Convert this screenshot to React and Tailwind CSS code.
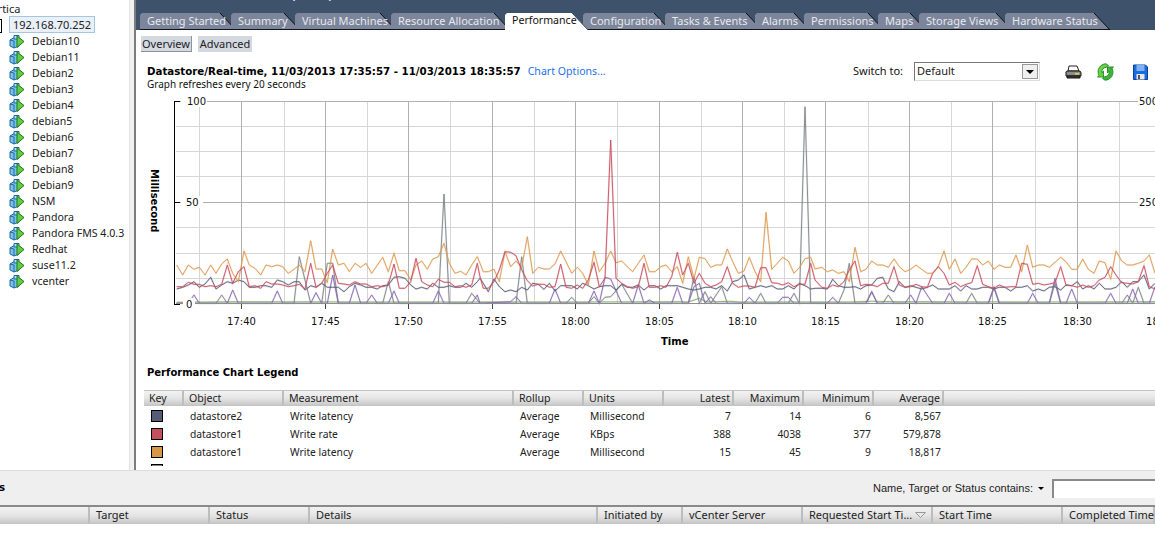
import React from "react";

const F = "font-['DejaVu_Sans',sans-serif]";
const UI = "font-['Noto_Sans',sans-serif]";

const hosts = ["Debian10","Debian11","Debian2","Debian3","Debian4","debian5","Debian6","Debian7","Debian8","Debian9","NSM","Pandora","Pandora FMS 4.0.3","Redhat","suse11.2","vcenter"];

const tabs = [
  ["Getting Started", 91, 96],
  ["Summary", 64, 69],
  ["Virtual Machines", 96, 101],
  ["Resource Allocation", 114, 119],
  ["Performance", 78, 83, true],
  ["Configuration", 82, 87],
  ["Tasks & Events", 90, 97],
  ["Alarms", 49, 55],
  ["Permissions", 74, 80],
  ["Maps", 41, 48],
  ["Storage Views", 86, 93],
  ["Hardware Status", 100, 105],
];

function conv(pts, ox) { return pts.map(([x, y]) => [ox + x / 3, 90 + y / 3]); }
function ln(a, b, c) { return [...conv(a, 140), ...conv(b, 480), ...conv(c, 815)].map(([x, y]) => x.toFixed(1) + "," + y.toFixed(1)).join(" "); }

const orange = ln(
  [[110,525],[128,555],[145,525],[162,538],[178,532],[195,555],[212,525],[228,550],[245,522],[262,507],[278,550],[295,575],[312,483],[328,525],[345,535],[362,555],[378,525],[395,530],[412,525],[428,530],[445,550],[462,538],[478,525],[495,545],[512,452],[528,537],[545,537],[562,578],[578,477],[595,525],[612,520],[628,545],[645,520],[662,532],[678,520],[695,550],[728,502],[745,545],[762,490],[778,542],[795,542],[812,570],[828,525],[845,513],[862,538],[878,507],[895,500],[912,460],[928,520],[945,550],[962,544],[978,555],[995,525],[1012,500]],
  [[0,520],[10,545],[25,545],[42,538],[58,575],[75,485],[92,530],[108,513],[125,533],[142,440],[158,550],[175,532],[192,537],[208,537],[225,522],[242,483],[258,515],[275,550],[292,532],[308,550],[325,585],[342,483],[358,545],[375,520],[392,483],[408,518],[425,513],[442,530],[458,545],[475,520],[492,495],[508,545],[525,545],[542,530],[558,525],[575,545],[592,530],[608,580],[625,500],[642,565],[658,502],[675,506],[692,532],[708,525],[725,525],[742,477],[758,515],[775,550],[792,543],[808,502],[825,545],[842,575],[858,367],[875,538],[892,520],[908,502],[925,513],[942,550],[958,533],[975,506],[992,502]],
  [[0,537],[20,532],[37,545],[53,540],[70,550],[87,545],[103,575],[120,472],[137,545],[153,538],[170,513],[187,525],[203,525],[220,532],[237,507],[253,530],[270,545],[287,538],[303,525],[320,538],[337,550],[353,550],[370,530],[387,483],[403,538],[420,507],[437,550],[453,532],[470,507],[487,507],[503,525],[520,513],[537,538],[553,525],[570,532],[587,532],[603,495],[620,545],[637,465],[653,532],[670,525],[687,525],[703,532],[720,517],[737,502],[753,515],[770,538],[787,538],[803,507],[820,538],[837,550],[853,513],[870,518],[887,568],[903,483],[920,513],[937,525],[953,525],[970,520],[987,513],[1003,495],[1020,550]]
);
const red = ln(
  [[110,590],[128,590],[145,577],[162,583],[178,583],[195,590],[212,587],[228,590],[245,583],[262,525],[278,580],[295,545],[312,530],[328,590],[345,587],[362,595],[378,575],[395,582],[412,582],[428,585],[445,590],[462,587],[478,583],[495,597],[512,520],[528,592],[545,580],[562,550],[578,525],[595,580],[612,582],[628,585],[645,575],[662,582],[678,582],[695,590],[712,587],[728,590],[745,585],[762,522],[778,595],[795,595],[812,575],[828,505],[845,575],[862,585],[878,590],[895,568],[912,577],[928,577],[945,590],[962,587],[978,592],[995,585],[1012,520]],
  [[0,560],[10,595],[25,595],[42,575],[58,540],[75,485],[92,487],[108,497],[125,540],[142,572],[158,588],[175,583],[192,583],[208,592],[225,590],[242,522],[258,592],[275,595],[292,585],[308,595],[325,570],[342,517],[358,590],[375,565],[392,150],[408,565],[425,580],[442,590],[458,595],[475,590],[492,520],[508,592],[525,592],[542,587],[558,592],[575,560],[592,487],[608,555],[625,520],[642,580],[658,550],[675,580],[692,590],[708,585],[725,575],[742,530],[758,580],[775,592],[792,588],[808,588],[825,592],[842,533],[858,533],[875,578],[892,580],[908,585],[925,578],[942,590],[958,583],[975,583],[992,520]],
  [[0,570],[20,592],[37,595],[53,585],[70,590],[87,575],[103,540],[120,513],[137,587],[153,583],[170,585],[187,590],[203,580],[220,580],[237,530],[253,585],[270,592],[287,590],[303,583],[320,590],[337,592],[353,550],[370,530],[387,550],[403,585],[420,577],[437,590],[453,583],[470,578],[487,527],[503,583],[520,590],[537,595],[553,585],[570,592],[587,590],[603,590],[620,520],[637,523],[653,583],[670,580],[687,585],[703,582],[720,578],[737,530],[753,585],[770,587],[787,592],[803,585],[820,592],[837,587],[853,570],[870,562],[887,530],[903,555],[920,578],[937,580],[953,582],[970,575],[987,527],[1003,590],[1020,597]]
);
const slate = ln(
  [[110,597],[128,592],[145,585],[162,575],[178,592],[195,582],[212,562],[228,597],[245,585],[262,575],[278,580],[295,570],[312,575],[328,592],[345,592],[362,587],[378,587],[395,592],[412,570],[428,575],[445,585],[462,575],[478,575],[495,600],[512,587],[528,592],[545,580],[562,592],[578,592],[595,592],[612,605],[628,590],[645,580],[662,585],[678,592],[695,592],[712,597],[728,587],[745,585],[762,562],[778,560],[795,565],[812,585],[828,597],[845,592],[862,597],[878,580],[895,592],[912,592],[928,587],[945,592],[962,592],[978,580],[995,592],[1012,575]],
  [[0,565],[10,580],[25,605],[42,567],[58,590],[75,605],[92,600],[108,605],[125,592],[142,600],[158,580],[175,583],[192,598],[208,580],[225,603],[242,587],[258,587],[275,587],[292,597],[308,580],[325,587],[342,597],[358,590],[375,587],[392,587],[408,600],[425,583],[442,592],[458,592],[475,585],[492,600],[508,587],[525,587],[542,597],[558,587],[575,587],[592,587],[608,592],[625,597],[642,600],[658,597],[675,592],[692,592],[708,597],[725,587],[742,603],[758,575],[775,570],[792,555],[808,597],[825,592],[842,587],[858,592],[875,587],[892,597],[908,597],[925,587],[942,597],[958,580],[975,587],[992,597]],
  [[0,595],[20,595],[37,597],[53,568],[70,587],[87,592],[103,592],[120,590],[137,597],[153,587],[170,585],[187,565],[203,562],[220,597],[237,605],[253,575],[270,592],[287,587],[303,592],[320,597],[337,592],[353,585],[370,597],[387,597],[403,597],[420,587],[437,603],[453,587],[470,597],[487,597],[503,592],[520,592],[537,597],[553,592],[570,592],[587,603],[603,592],[620,592],[637,587],[653,603],[670,597],[687,603],[703,592],[720,590],[737,600],[753,585],[770,587],[787,575],[803,597],[820,587],[837,597],[853,580],[870,597],[887,597],[903,592],[920,575],[937,592],[953,575],[970,575],[987,555],[1003,597],[1020,580]]
);
const gray = ln(
  [[110,640],[228,640],[245,615],[262,640],[462,640],[478,500],[495,570],[512,640],[545,640],[562,520],[578,520],[595,640],[728,640],[745,575],[762,640],[895,640],[912,312],[928,640],[978,640],[995,610],[1012,630]],
  [[0,640],[108,640],[125,500],[142,640],[258,640],[275,622],[292,640],[325,640],[342,620],[358,640],[375,622],[392,620],[425,583],[458,640],[625,640],[642,560],[658,640],[675,605],[692,640],[725,590],[742,640],[825,640],[842,610],[858,640],[925,640],[942,610],[958,640],[975,50],[992,640]],
  [[70,640],[87,600],[103,520],[120,640],[153,640],[170,605],[187,640],[203,640],[220,615],[237,640],[453,640],[470,610],[487,640],[520,640],[537,595],[553,640],[703,640],[720,580],[737,640],[920,640],[937,615],[953,640],[970,592],[987,640],[1020,640]]
);
const purple = ln(
  [[110,640],[145,640],[162,615],[178,640],[262,640],[278,600],[295,640],[395,640],[412,603],[428,640],[512,640],[528,608],[545,640],[562,640],[578,555],[595,640],[628,640],[645,585],[662,640],[678,640],[695,615],[712,640],[745,640],[762,603],[778,640],[878,640],[895,603],[912,640],[995,640],[1012,615]],
  [[0,640],[92,635],[108,620],[125,640],[208,640],[225,597],[242,640],[325,640],[342,603],[358,640],[375,562],[392,567],[425,640],[458,640],[475,585],[492,640],[508,630],[525,640],[575,640],[592,592],[608,640],[625,640],[642,590],[658,580],[675,640],[692,620],[708,640],[792,640],[808,622],[825,640],[892,640],[908,622],[925,622],[942,640]],
  [[37,640],[53,622],[70,640],[153,640],[170,605],[187,640],[270,640],[287,615],[303,640],[320,590],[353,640],[387,640],[403,610],[420,640],[520,640],[537,590],[553,640],[637,640],[653,610],[670,640],[703,640],[720,565],[737,640],[753,640],[770,597],[787,640],[870,640],[887,610],[903,640],[937,640],[953,597],[970,640],[1003,640],[1020,590]]
);
const green = ln(
  [[110,637],[300,635],[700,636],[1020,636]],
  [[300,636],[600,635],[625,636],[658,625],[680,636],[750,634],[780,636],[1000,636]],
  [[100,636],[170,634],[250,635],[700,636],[1020,635]]
);

const majors = [241, 325, 408, 492, 575, 659, 742, 825, 909, 992, 1077];
const minors = [199, 284, 367, 450, 534, 617, 701, 784, 868, 951, 1035, 1119];
const hLines = [126, 151, 176, 227, 253, 278];
const xLabels = ["17:40","17:45","17:50","17:55","18:00","18:05","18:10","18:15","18:20","18:25","18:30","18:35"];

function Series({ points, color }) {
  return (
    <>
      <polyline points={points} fill="none" stroke={color} strokeWidth="2" strokeOpacity="0.18" />
      <polyline points={points} fill="none" stroke={color} strokeWidth="1" strokeOpacity="0.9" />
    </>
  );
}

function Chart() {
  const fam = { fontFamily: "'DejaVu Sans', sans-serif" };
  return (
    <svg width="1155" height="260" viewBox="0 90 1155 260" className="block shrink-0">
      {minors.map((x) => <line key={x} x1={x + 0.5} x2={x + 0.5} y1="101" y2="304" stroke="#d6d6d6" />)}
      {hLines.map((y) => <line key={y} x1="176" x2="1155" y1={y + 0.5} y2={y + 0.5} stroke="#d6d6d6" />)}
      {majors.map((x) => <line key={x} x1={x + 0.5} x2={x + 0.5} y1="101" y2="304" stroke="#b0b0b0" />)}
      {majors.map((x) => <line key={"t" + x} x1={x + 0.5} x2={x + 0.5} y1="304" y2="309" stroke="#444" />)}
      <line x1="176" x2="1138" y1="101.5" y2="101.5" stroke="#b0b0b0" />
      <line x1="176" x2="1138" y1="202.5" y2="202.5" stroke="#b0b0b0" />
      <Series points={green} color="#7fb069" />
      <Series points={gray} color="#7d8589" />
      <Series points={purple} color="#8a69b0" />
      <Series points={slate} color="#5c6078" />
      <Series points={orange} color="#dd9a50" />
      <Series points={red} color="#c9505f" />
      <line x1="176" x2="1155" y1="303.5" y2="303.5" stroke="#8f8a96" />
      <line x1="174.5" x2="174.5" y1="101" y2="305" stroke="#000" />
      <line x1="174" x2="180" y1="101.5" y2="101.5" stroke="#000" />
      <line x1="174" x2="180" y1="202.5" y2="202.5" stroke="#000" />
      <line x1="174" x2="180" y1="304.5" y2="304.5" stroke="#000" />
      <rect x="181" y="95" width="26" height="12" fill="#fff" />
      <rect x="181" y="196" width="22" height="12" fill="#fff" />
      <rect x="183" y="298" width="12" height="8" fill="#fff" />
      <g style={fam} fontSize="10" fill="#111">
        <text x="187" y="105">100</text>
        <text x="186" y="206">50</text>
        <text x="186" y="308">0</text>
        <text x="1139" y="105">500</text>
        <text x="1139" y="206">250</text>
        {xLabels.map((l, i) => <text key={l} x={(i < 11 ? majors[i] : 1160) + 0.5} y="325" textAnchor="middle">{l}</text>)}
      </g>
      <g style={fam} fontSize="10" fontWeight="700" fill="#000">
        <text x="661" y="345">Time</text>
        <text transform="translate(151 169) rotate(90)">Millisecond</text>
      </g>
    </svg>
  );
}

function HostIcon() {
  return (
    <svg width="16" height="15" viewBox="0 0 16 15" className="shrink-0">
      <path d="M1 6 L6 3 L10 5 V12 L5 14 L1 12 Z" fill="#7cc0e6" stroke="#1d6aa8" />
      <path d="M5 1.5 H10 V5 H5Z" fill="#b8e0f4" stroke="#1d6aa8" />
      <path d="M5 7 V14 M1 6 L5 7" stroke="#1d6aa8" fill="none" />
      <path d="M8 2 L15 7.5 L8 13.5 Z" fill="#62cc48" stroke="#1f7a18" strokeLinejoin="round" />
    </svg>
  );
}

function Tab({ label, slot, w, active }) {
  const pts = `0,17 0,2 2,0 ${w - 16},0 ${w},17`;
  return (
    <div className={`relative h-[17px] shrink-0 w-[var(--s)] ${active ? "z-10" : ""}`} style={{ "--s": slot + "px" }}>
      <svg width={w} height="17" className="absolute left-0 top-0 overflow-visible">
        <polygon points={pts} fill={active ? "#ffffff" : "#7c859a"} />
        {!active && <line x1="0" x2={w} y1="16.5" y2="16.5" stroke="#10151c" />}
        <line x1={w - 16} y1="0" x2={w} y2="17" stroke={active ? "#3e526c" : "#0c0f14"} />
      </svg>
      <span className={`absolute left-[7px] top-[-1px] whitespace-nowrap leading-[17px] ${UI} ${active ? "text-[#111] text-[10.6px]" : "text-[#e6e9ee] text-[11px]"}`}>{label}</span>
    </div>
  );
}

const legendCols = [
  ["Key", "w-[40px]", ""], ["Object", "w-[100px]", ""], ["Measurement", "w-[230px]", ""], ["Rollup", "w-[70px]", ""], ["Units", "w-[80px]", ""],
  ["Latest", "w-[70px]", "r"], ["Maximum", "w-[70px]", "r"], ["Minimum", "w-[70px]", "r"], ["Average", "w-[70px]", "r"],
];
const rows = [
  ["#565b77", "datastore2", "Write latency", "Average", "Millisecond", "7", "14", "6", "8,567"],
  ["#c4505e", "datastore1", "Write rate", "Average", "KBps", "388", "4038", "377", "579,878"],
  ["#d79748", "datastore1", "Write latency", "Average", "Millisecond", "15", "45", "9", "18,817"],
  ["#80868a", "datastore1", "Read latency", "Average", "Millisecond", "2", "54", "0", "3,214"],
];
const taskCols = [
  ["", "w-[90px]"], ["Target", "w-[120px]"], ["Status", "w-[100px]"], ["Details", "w-[288px]"], ["Initiated by", "w-[85px]"], ["vCenter Server", "w-[120px]"],
  ["Requested Start Ti...", "w-[130px]"], ["Start Time", "w-[130px]"], ["Completed Time", "w-[92px]"],
];
const grad = "bg-gradient-to-b from-[#f2f2f2] via-[#e6e6e6] to-[#c9c9c9]";

function Printer() {
  return (
    <svg width="17" height="15" viewBox="0 0 17 15">
      <path d="M4 1 H12 L14 6 H3Z" fill="#fff" stroke="#222" />
      <path d="M1 7 Q1 6 3 6 H14 Q16 6 16 8 V11 H1Z" fill="#8c8c8c" stroke="#111" />
      <path d="M2 11 H15 V13 H2Z" fill="#444" stroke="#111" />
      <rect x="10" y="8" width="4" height="1.5" fill="#e7d23a" />
    </svg>
  );
}
function Refresh() {
  return (
    <svg width="17" height="18" viewBox="0 0 17 18">
      <path d="M9 0.8 A8 8 0 0 0 2 12.6 L0.5 14 H6.5 V8 L4.8 9.7 A4.4 4.4 0 0 1 9 4.4 L11.5 2.6 Z" fill="#6ccf45" stroke="#1c8a22" strokeWidth="0.9" strokeLinejoin="round" />
      <path d="M8 17.2 A8 8 0 0 0 15 5.4 L16.5 4 H10.5 V10 L12.2 8.3 A4.4 4.4 0 0 1 8 13.6 L5.5 15.4 Z" fill="#3fb536" stroke="#1c8a22" strokeWidth="0.9" strokeLinejoin="round" />
    </svg>
  );
}
function Save() {
  return (
    <svg width="15" height="16" viewBox="0 0 15 16">
      <path d="M0.5 1 H12.5 L14.5 3 V15.5 H0.5Z" fill="#1a6be0" stroke="#0c3f9c" />
      <rect x="3.5" y="1" width="8" height="6" fill="#7fb2f2" />
      <rect x="3.5" y="10" width="8" height="5.5" fill="#e8e8e8" />
      <rect x="5" y="11" width="2" height="4" fill="#555" />
    </svg>
  );
}

export default function App() {
  return (
    <div className={`h-[538px] w-[1155px] overflow-hidden bg-white flex flex-col text-[#222] ${UI}`}>
      <div className="h-[470px] flex shrink-0 overflow-hidden">
        {/* Tree */}
        <div className="w-[130px] shrink-0 bg-white border-r border-[#e3e3e3] overflow-hidden text-[10.6px]">
          <div className="h-[16px] leading-[17px] ml-[-15px] whitespace-nowrap text-[11px]">Vertica</div>
          <div className="h-[17px] flex items-center">
            <div className="w-[2px] h-[14px] mt-[3px] border-y border-r border-black shrink-0" />
            <div className="ml-[7px] w-[86px] h-[17px] border border-[#a6c5e3] bg-[#e9f0f8] pl-[3px] leading-[15px] whitespace-nowrap text-[11px]">192.168.70.252</div>
          </div>
          <div>
            {hosts.map((h) => (
              <div key={h} className="h-[16px] flex items-center pl-[9px] gap-[7px] whitespace-nowrap">
                <HostIcon />
                <span className="leading-[16px]">{h}</span>
              </div>
            ))}
          </div>
        </div>
        {/* gutter */}
        <div className="w-[6px] shrink-0 bg-[#f1f1f1] border-r-[2px] border-[#7d7d7d]" />
        {/* Main */}
        <div className="flex-1 min-w-0 flex flex-col overflow-hidden">
          <div className="h-[30px] shrink-0 bg-[#3e526c] relative overflow-hidden">
            <div className={`h-[13px] pl-[7px] mt-[-11px] text-[10px] leading-[13px] font-bold text-white whitespace-nowrap ${F}`}>localhost.lan VMware ESXi, 4.1.0, 260247</div>
            <div className="flex pl-[4px] pt-[11px]">
              {tabs.map(([l, s, w, a]) => <Tab key={l} label={l} slot={s} w={w} active={a} />)}
            </div>
          </div>
          <div className="flex gap-[6px] pl-[5px] pt-[6px] h-[32px] shrink-0 text-[11px]">
            <div className="w-[51px] h-[16px] bg-[#d4d8e0] border-r border-b border-[#8f939b] text-center leading-[15px]">Overview</div>
            <div className="w-[54px] h-[16px] bg-[#d4d8e0] text-center leading-[16px]">Advanced</div>
          </div>
          <div className="h-[28px] shrink-0 pl-[11px] flex relative">
            <div className="flex-1 min-w-0">
              <div className="flex items-center h-[18px] pt-[2px]">
                <span className={`text-[10.25px] font-bold text-black whitespace-nowrap ${F}`}>Datastore/Real-time, 11/03/2013 17:35:57 - 11/03/2013 18:35:57</span>
                <span className="ml-[7px] text-[10.6px] text-[#1f6fe8] whitespace-nowrap">Chart Options…</span>
              </div>
              <div className="text-[10px] leading-[12px] mt-[-2px] text-[#111]">Graph refreshes every 20 seconds</div>
            </div>
            <div className="flex items-start shrink-0 pr-[7px]">
              <span className="text-[11px] leading-[18px] mr-[11px] text-[#111]">Switch to:</span>
              <div className="w-[126px] h-[19px] border border-t-[#777] border-l-[#777] border-r-[#ddd] border-b-[#ddd] bg-white flex items-center justify-between pl-[2px] pr-[1px]">
                <span className="text-[11px]">Default</span>
                <span className="w-[16px] h-[15px] bg-[#efefef] border border-[#999] flex items-center justify-center"><span className="border-x-[4px] border-x-transparent border-t-[4px] border-t-black" /></span>
              </div>
              <div className="ml-[25px] mt-[1px] flex items-center">
                <Printer />
                <span className="ml-[15px]"><Refresh /></span>
                <span className="ml-[19px]"><Save /></span>
              </div>
            </div>
          </div>
          {/* Chart: own canvas coordinates equal page coordinates */}
          <div className="ml-[-136px] shrink-0"><Chart /></div>
          <div className="h-[40px] shrink-0 pl-[11px] pt-[14px] text-[10px] leading-[16px] font-bold text-black">
            <span className={F}>Performance Chart Legend</span>
          </div>
          <div className="pl-[8px] flex-1 min-h-0 flex flex-col overflow-hidden">
            <div className={`flex h-[16px] shrink-0 border-y border-[#c4c4c4] ${grad} text-[10.6px]`}>
              {legendCols.map(([t, w, r]) => (
                <div key={t} className={`${w} shrink-0 border-r-2 border-[#bdbdbd] leading-[14px] ${r ? "text-right pr-[2px]" : "pl-[5px]"}`}>{t}</div>
              ))}
              <div className="flex-1" />
            </div>
            <div className="h-[60px] overflow-hidden pt-[1px] text-[10.3px] text-[#222]">
              {rows.map((r) => (
                <div key={r[0]} className="flex h-[18px] items-center">
                  {r.map((c, i) => i === 0
                    ? <div key={i} className="w-[40px] shrink-0 pl-[7px]"><div className="w-[12px] h-[12px] border border-black" style={{ background: c }} /></div>
                    : <div key={i} className={`${legendCols[i].slice(1)[0]} shrink-0 leading-[18px] ${legendCols[i][2] ? "text-right pr-[3px]" : "pl-[6px]"}`}>{c}</div>)}
                </div>
              ))}
            </div>
          </div>
        </div>
      </div>
      {/* Recent tasks bar */}
      <div className="h-[37px] shrink-0 bg-[#efefef] border-t border-[#dcdcdc] border-b-2 border-b-[#8a8a8a] flex items-center justify-between">
        <span className={`text-[10.25px] font-bold text-black ml-[-1px] ${F}`}>s</span>
        <div className="flex items-center">
          <span className="font-['Liberation_Sans',sans-serif] text-[11px] text-[#222] whitespace-nowrap">Name, Target or Status contains:</span>
          <span className="ml-[5px] border-x-[3px] border-x-transparent border-t-[3px] border-t-black" />
          <div className="ml-[8px] w-[103px] h-[19px] bg-white border-l-2 border-t-2 border-[#8a8a8a]" />
        </div>
      </div>
      <div className={`flex h-[17px] shrink-0 ${grad} border-b border-[#c4c4c4] text-[11px]`}>
        {taskCols.map(([t, w]) => (
          <div key={w + t} className={`${w} shrink-0 border-r-2 border-[#bdbdbd] pl-[6px] leading-[16px] whitespace-nowrap flex items-center gap-[3px]`}>
            {t}
            {t.startsWith("Requested") && <svg width="11" height="6" viewBox="0 0 11 6"><path d="M0.5 0.5 H10.5 L5.5 5.5Z" fill="#e8e8e8" stroke="#999" /></svg>}
          </div>
        ))}
      </div>
      <div className="flex-1 bg-white" />
    </div>
  );
}
